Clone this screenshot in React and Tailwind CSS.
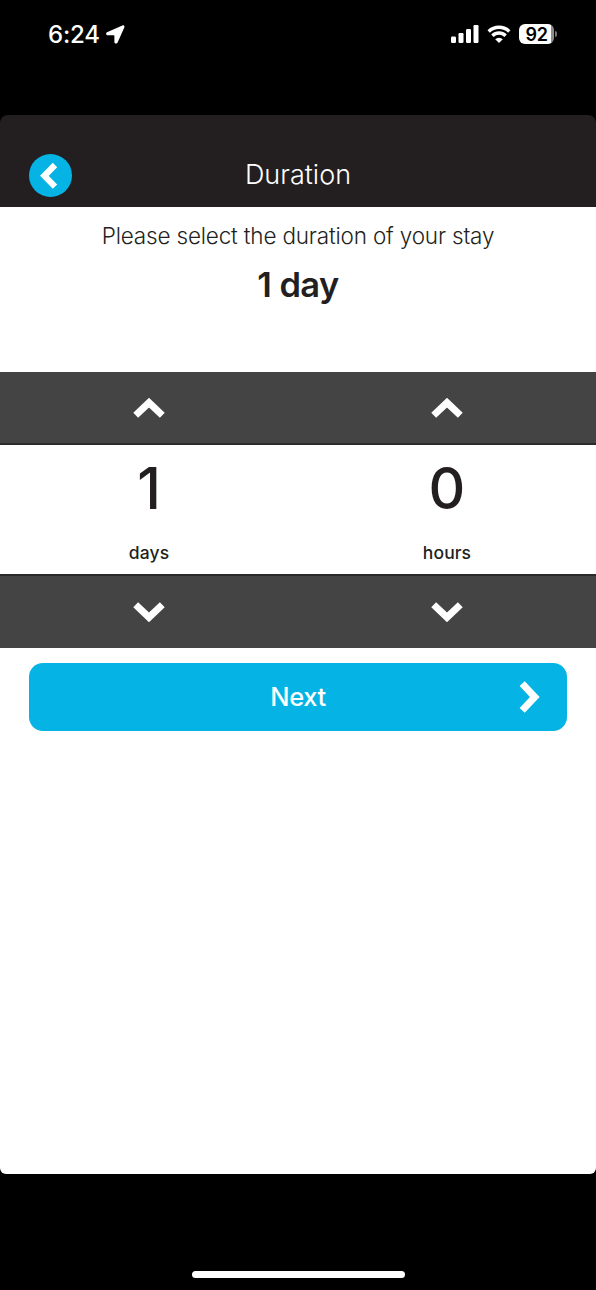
import React, { useState } from 'react';

const ArrowUp = () => (
  <svg className="w-8 h-5" viewBox="0 0 32 20" fill="none" stroke="white" strokeWidth="7">
    <path d="M2.7 17.3 16 4.6 29.3 17.3" />
  </svg>
);

const ArrowDown = () => (
  <svg className="w-8 h-5" viewBox="0 0 32 20" fill="none" stroke="white" strokeWidth="7">
    <path d="M2.7 2.7 16 15.4 29.3 2.7" />
  </svg>
);

const StatusBar = () => (
  <div className="h-[115px] shrink-0 pt-[22px] pl-12 pr-[39px] flex items-start justify-between text-white">
    <div className="flex items-center h-6">
      <span className="mt-px text-[24px] leading-6 font-medium tracking-[-0.2px]">6:24</span>
      <svg className="w-[19px] h-[19px] ml-[6px]" viewBox="0 0 19 19" fill="white">
        <path d="M16.4.5 1 7.2C-.4 7.9 0 10.2 1.5 10.2H7.7c.4 0 .7.3.7.7v6c0 2 2.5 2.2 3.2.5L18.3 2.5C18.9 1.1 17.8-.1 16.4.5Z" />
      </svg>
    </div>
    <div className="flex items-center h-6">
      <svg className="w-7 h-[18px]" viewBox="0 0 28 18" fill="white">
        <rect x="0" y="11.5" width="5" height="6.5" rx="1.2" />
        <rect x="7.5" y="8" width="5" height="10" rx="1.2" />
        <rect x="15" y="4" width="5" height="14" rx="1.2" />
        <rect x="22.5" y="0" width="5" height="18" rx="1.2" />
      </svg>
      <svg className="w-6 h-[18px] ml-2" viewBox="0 0 24 18" fill="none" stroke="white" strokeWidth="3.5">
        <path d="M1.7 6.4a15 15 0 0 1 20.6 0" />
        <path d="M5.4 10.7a9.4 9.4 0 0 1 13.2 0" />
        <path d="M12 18 8.2 14.2a5.4 5.4 0 0 1 7.6 0Z" fill="white" stroke="none" />
      </svg>
      <div className="ml-2 w-[35px] h-5 rounded-[6px] bg-linear-to-r from-white from-92% to-[#8c8c8c] to-92% text-black text-[18px] leading-[21px] font-semibold text-center tracking-[-0.3px]">
        92
      </div>
      <div className="w-[2px] h-[6px] ml-px rounded-r-full bg-[#777]" />
    </div>
  </div>
);

const Stepper = ({ value, unit, onChange }) => (
  <div className="flex-1">
    <button
      onClick={() => onChange(value + 1)}
      className="w-full h-[73px] flex items-center justify-center bg-[#444] border-b-2 border-[#2b2a2a]"
    >
      <ArrowUp />
    </button>
    <div className="h-[129px] flex flex-col items-center text-[#231f20]">
      <span className="mt-[10px] text-[57px] leading-[68px] font-medium">{value}</span>
      <span className="mt-[18px] text-[17.5px] leading-6 font-medium tracking-[0.1px]">{unit}</span>
    </div>
    <button
      onClick={() => onChange(Math.max(0, value - 1))}
      className="w-full h-[74px] flex items-center justify-center bg-[#444] border-t-2 border-[#2b2a2a]"
    >
      <ArrowDown />
    </button>
  </div>
);

const App = () => {
  const [days, setDays] = useState(1);
  const [hours, setHours] = useState(0);

  return (
    <main className="w-full h-[1290px] flex flex-col bg-black font-['Inter',sans-serif]">
      <StatusBar />

      <header className="h-[92px] shrink-0 pt-[29px] px-[29px] grid grid-cols-[43px_1fr_43px] items-center rounded-t-lg bg-[#231f20]">
        <button className="w-[43px] h-[43px] rounded-full bg-[#05b4e4]">
          <svg className="w-[43px] h-[43px]" viewBox="0 0 43 43" fill="none" stroke="white" strokeWidth="6.2">
            <path d="M26 11 15.4 21.8 26 32.6" />
          </svg>
        </button>
        <h1 className="-mt-[2px] text-[27px] leading-8 font-light text-center text-white">Duration</h1>
      </header>

      <section className="h-[967px] shrink-0 flex flex-col rounded-b-md bg-white text-[#231f20]">
        <p className="mt-[14px] text-[22.5px] leading-[30px] font-light text-center tracking-[-0.18px]">
          Please select the duration of your stay
        </p>
        <p className="mt-[14px] text-[34.5px] leading-10 font-semibold text-center tracking-[-0.6px]">
          {days} {days === 1 ? 'day' : 'days'}
        </p>

        <div className="mt-[67px] flex">
          <Stepper value={days} unit="days" onChange={setDays} />
          <Stepper value={hours} unit="hours" onChange={setHours} />
        </div>

        <button className="mt-[15px] mx-[29px] h-[68px] shrink-0 px-[27px] grid grid-cols-[21px_1fr_21px] items-center rounded-[14px] bg-[#05b4e4] text-white">
          <span className="col-start-2 text-[25.5px] leading-8 font-medium tracking-[-0.4px]">Next</span>
          <svg className="w-[21px] h-8" viewBox="0 0 21 32" fill="none" stroke="white" strokeWidth="7">
            <path d="M3.2 2.7 15.8 16 3.2 29.3" />
          </svg>
        </button>
      </section>

      <div className="mt-[97px] mx-auto w-[213px] h-[7px] rounded-full bg-white" />
    </main>
  );
};

export default App;
